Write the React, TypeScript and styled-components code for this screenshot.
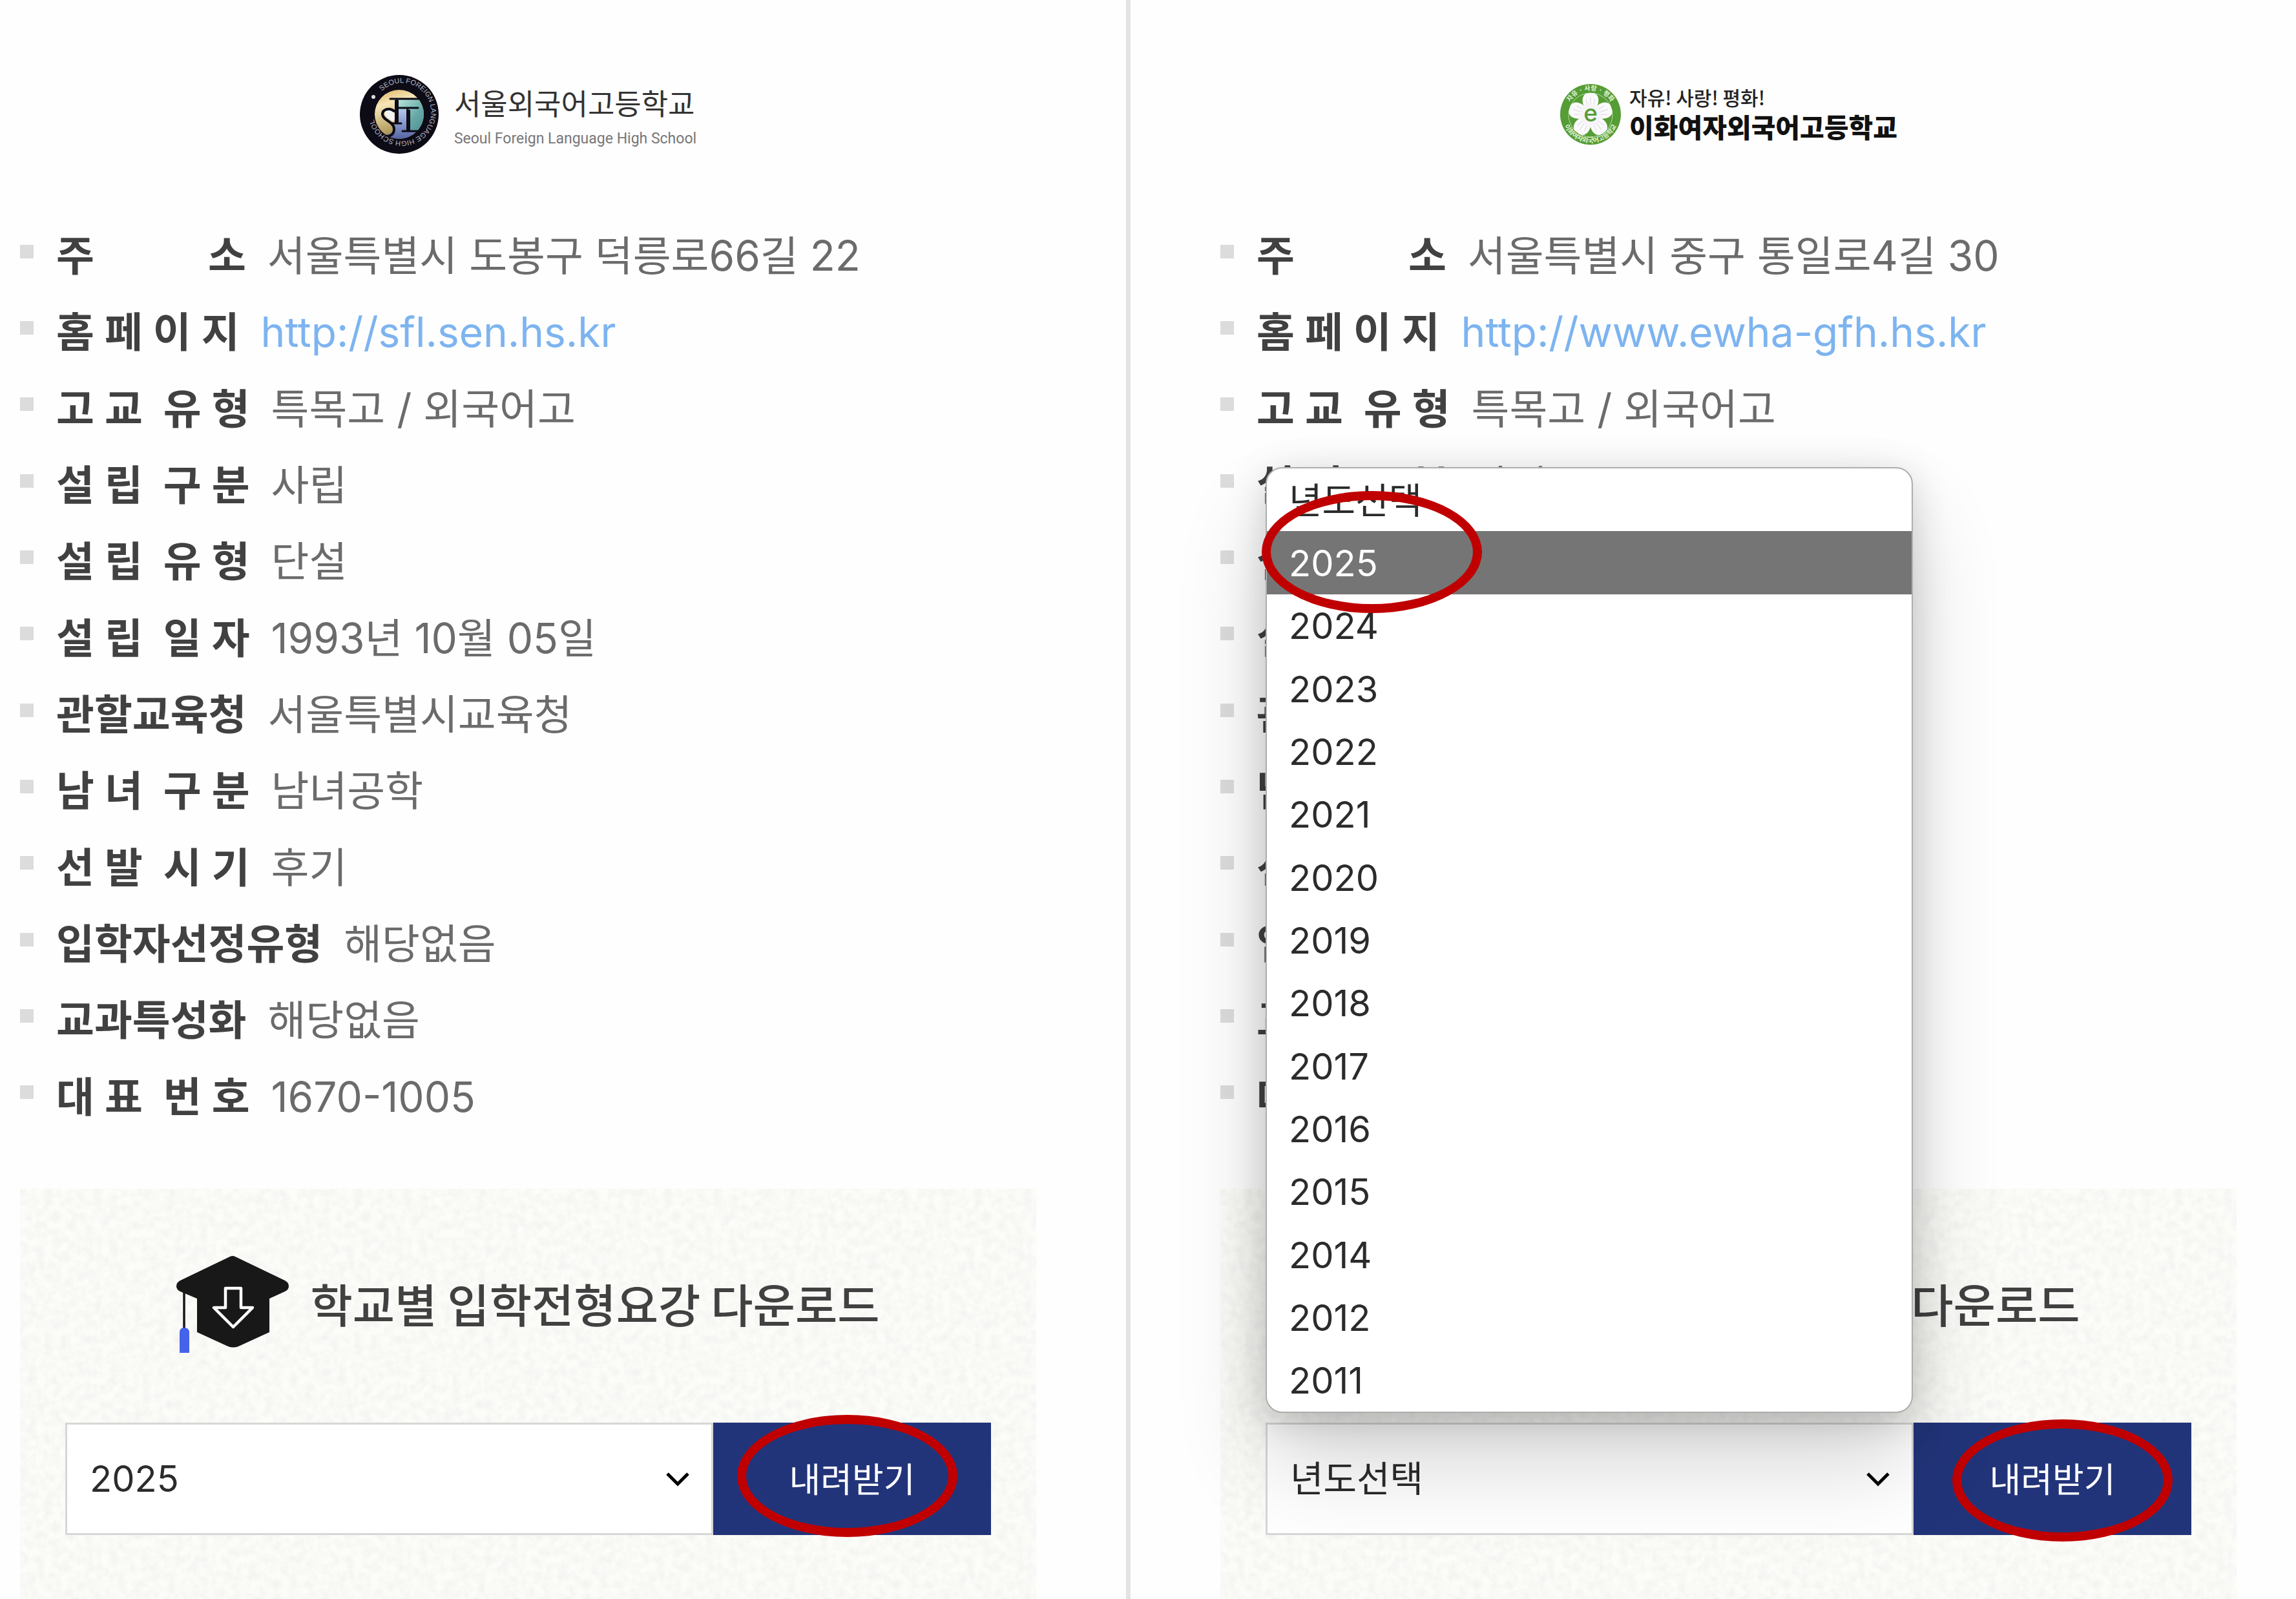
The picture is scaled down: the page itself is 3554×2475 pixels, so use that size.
import React, { useId } from "react";
import styled, { createGlobalStyle } from "styled-components";

const GlobalStyle = createGlobalStyle`
  *, *::before, *::after { box-sizing: border-box; }
  body {
    margin: 0;
    background: #fefefe;
    font-family: Inter, "Noto Sans CJK KR", sans-serif;
    color: #2b2b2b;
  }
  ul { margin: 0; padding: 0; list-style: none; }
`;

const paper = `<svg xmlns="http://www.w3.org/2000/svg" width="480" height="480"><filter id="n" x="0" y="0" width="100%" height="100%"><feTurbulence type="fractalNoise" baseFrequency="0.08" numOctaves="2" seed="4" stitchTiles="stitch"/><feColorMatrix values="0 0 0 0 0.55  0 0 0 0 0.56  0 0 0 0 0.57  0.28 0 0 0 -0.09"/></filter><rect width="480" height="480" filter="url(#n)"/></svg>`;
const paperUrl = `url("data:image/svg+xml,${encodeURIComponent(paper)}")`;

const Page = styled.main`
  display: grid;
  grid-template-columns: 1750fr 1804fr;
  min-height: 100vh;
`;

const Panel = styled.section<{ $first?: boolean }>`
  display: flex;
  flex-direction: column;
  min-width: 0;
  min-height: 100vh;
  padding: ${(p) => (p.$first ? "0 139px 0 31px" : "0 92px 0 139px")};
  border-right: ${(p) => (p.$first ? "7px solid #e3e3e3" : "0")};
`;

const Brand = styled.header<{ $gap: number }>`
  display: flex;
  justify-content: center;
  align-items: center;
  gap: ${(p) => p.$gap}px;
  height: 337px;
  padding-top: 16px;
`;

const BrandText = styled.div<{ $gap: number }>`
  display: flex;
  flex-direction: column;
  gap: ${(p) => p.$gap}px;
  white-space: nowrap;
`;

const SeoulName = styled.strong`
  font: 400 45px/68px "Noto Sans CJK KR", sans-serif;
  color: #333;
`;

const SeoulEnglish = styled.span`
  font: 400 23px/28px Roboto, sans-serif;
  color: #777;
`;

const EwhaMotto = styled.span`
  font: 500 30px/36px "Noto Sans CJK KR", sans-serif;
  color: #222;
`;

const EwhaName = styled.strong`
  font: 900 41px/54px "Noto Sans CJK KR", sans-serif;
  color: #111;
`;

const Facts = styled.ul`
  display: grid;
  grid-auto-rows: 1fr;
  height: 1420px;
  margin-bottom: 83px;
`;

const Fact = styled.li`
  display: flex;
  align-items: center;
  font-size: 64px;
  line-height: 96px;
  white-space: nowrap;

  &::before {
    content: "";
    width: 21px;
    height: 21px;
    margin: 0 35px 14px 0;
    background: #dcdcdc;
  }
`;

const FactLabel = styled.span`
  display: flex;
  margin-right: 33px;
  font-weight: 700;
  color: #414141;
`;

const Syllable = styled.span<{ $spaces: number }>`
  margin-left: ${(p) => p.$spaces * 16}px;
`;

const FactValue = styled.span`
  color: #6b6b6b;
`;

const FactLink = styled.a`
  color: #7db4f0;
  text-decoration: none;
`;

const Download = styled.section`
  display: flex;
  flex-direction: column;
  flex: 1;
  gap: 107px;
  padding: 104px 70px 98px;
  background: #fcfcf9 ${paperUrl};
`;

const DownloadTitle = styled.h2`
  display: flex;
  align-items: center;
  justify-content: center;
  gap: 32px;
  height: 151px;
  margin: 0;
  font: 500 71px/106px "Noto Sans CJK KR", sans-serif;
  color: #414141;
  white-space: nowrap;

  label {
    padding-bottom: 8px;
  }
`;

const Controls = styled.div`
  display: grid;
  grid-template-columns: 1003fr 430fr;
  height: 174px;
`;

const SelectBox = styled.div`
  position: relative;
`;

const YearSelect = styled.select`
  appearance: none;
  width: 100%;
  height: 100%;
  padding: 0 100px 0 35px;
  border: 3px solid #d7d7d7;
  border-radius: 0;
  background: #fff;
  font: 400 56px/84px Inter, "Noto Sans CJK KR", sans-serif;
  color: #2b2b2b;
`;

const Chevron = styled.svg`
  position: absolute;
  right: 34px;
  top: 50%;
  width: 42px;
  height: 28px;
  margin-top: -14px;
  pointer-events: none;
`;

const ButtonBox = styled.div`
  position: relative;
`;

const DownloadButton = styled.button`
  width: 100%;
  height: 100%;
  padding: 0 0 4px;
  border: 0;
  background: #223479;
  color: #fff;
  font: 400 53px/78px "Noto Sans CJK KR", sans-serif;
`;

const Mark = styled.span<{ $left: number; $top: number }>`
  position: absolute;
  left: ${(p) => p.$left}px;
  top: ${(p) => p.$top}px;
  width: 341px;
  height: 189px;
  border: 14px solid #c00000;
  border-radius: 50%;
  pointer-events: none;
`;

const MenuBox = styled.div`
  position: absolute;
  left: 0;
  right: 1px;
  bottom: calc(100% + 15px);
  z-index: 2;
`;

const Menu = styled.ul`
  display: flex;
  flex-direction: column;
  height: 1464px;
  border: 2px solid #adadad;
  border-radius: 26px;
  background: #fff;
  overflow: hidden;
  box-shadow: 0 12px 60px rgba(0, 0, 0, 0.17), 0 80px 140px rgba(0, 0, 0, 0.16);
`;

const MenuItem = styled.li`
  display: flex;
  flex: 1;
  min-height: 0;
`;

const MenuOption = styled.button<{ $active: boolean }>`
  width: 100%;
  padding: 2px 34px 0;
  border: 0;
  background: ${(p) => (p.$active ? "#757575" : "transparent")};
  color: ${(p) => (p.$active ? "#fff" : "#2b2b2b")};
  font: 400 56px/84px Inter, "Noto Sans CJK KR", sans-serif;
  text-align: left;
`;

const placeholder = "년도선택";
const years = [
  "2025", "2024", "2023", "2022", "2021", "2020", "2019",
  "2018", "2017", "2016", "2015", "2014", "2012", "2011",
];

type FactData = { label: string; value: string; link?: boolean };

const seoulFacts: FactData[] = [
  { label: "주           소", value: "서울특별시 도봉구 덕릉로66길 22" },
  { label: "홈 페 이 지", value: "http://sfl.sen.hs.kr", link: true },
  { label: "고 교  유 형", value: "특목고 / 외국어고" },
  { label: "설 립  구 분", value: "사립" },
  { label: "설 립  유 형", value: "단설" },
  { label: "설 립  일 자", value: "1993년 10월 05일" },
  { label: "관할교육청", value: "서울특별시교육청" },
  { label: "남 녀  구 분", value: "남녀공학" },
  { label: "선 발  시 기", value: "후기" },
  { label: "입학자선정유형", value: "해당없음" },
  { label: "교과특성화", value: "해당없음" },
  { label: "대 표  번 호", value: "1670-1005" },
];

const ewhaFacts: FactData[] = seoulFacts.map((fact, i) => {
  if (i === 0) return { ...fact, value: "서울특별시 중구 통일로4길 30" };
  if (i === 1) return { ...fact, value: "http://www.ewha-gfh.hs.kr" };
  return fact;
});

function SpacedLabel({ text }: { text: string }) {
  const parts = text.match(/ *[^ ]+/g) ?? [];
  return (
    <FactLabel>
      {parts.map((part, i) => (
        <Syllable key={i} $spaces={part.length - part.trim().length}>
          {part.trim()}
        </Syllable>
      ))}
    </FactLabel>
  );
}

function FactList({ facts }: { facts: FactData[] }) {
  return (
    <Facts>
      {facts.map((fact) => (
        <Fact key={fact.label}>
          <SpacedLabel text={fact.label} />
          {fact.link ? (
            <FactLink href={fact.value}>{fact.value}</FactLink>
          ) : (
            <FactValue>{fact.value}</FactValue>
          )}
        </Fact>
      ))}
    </Facts>
  );
}

function SeoulEmblem() {
  return (
    <svg width="122" height="122" viewBox="0 0 122 122" aria-hidden="true">
      <defs>
        <linearGradient id="gold" x1="0" y1="0" x2="0.3" y2="1">
          <stop offset="0" stopColor="#d9a94e" />
          <stop offset="0.35" stopColor="#f6e6b8" />
          <stop offset="1" stopColor="#9c8540" />
        </linearGradient>
        <linearGradient id="teal" x1="0" y1="0" x2="1" y2="1">
          <stop offset="0" stopColor="#c4ebe6" />
          <stop offset="0.6" stopColor="#66a8a6" />
          <stop offset="1" stopColor="#4c8f90" />
        </linearGradient>
        <linearGradient id="navy" x1="0" y1="0" x2="0" y2="1">
          <stop offset="0" stopColor="#b4c4ee" />
          <stop offset="1" stopColor="#4f5f9e" />
        </linearGradient>
        <clipPath id="disc"><circle cx="61" cy="61" r="38" /></clipPath>
        <path id="ring" d="M34 25 A45 45 0 1 1 33 26" />
      </defs>
      <circle cx="61" cy="61" r="61" fill="#0c0b16" />
      <circle cx="21" cy="34" r="3" fill="#ddd" />
      <g clipPath="url(#disc)">
        <rect x="20" y="20" width="82" height="82" fill="url(#gold)" />
        <path d="M54 36 H102 V88 H74 L68 60 H54 Z" fill="url(#teal)" />
        <path d="M56 54 H74 V86 H92 Q78 102 61 102 Q46 100 40 92 Q54 92 54 76 Z" fill="url(#navy)" />
        <path d="M53 56 C42 46 34 58 42 66 C50 72 54 76 54 64 Z" fill="#f4f3f4" />
      </g>
      <g fill="none" stroke="#0c0b16" strokeLinecap="round">
        <path d="M53 56 C46 50 35 53 35 61 C36 71 53 72 53 84 C53 92 46 97 38 94" strokeWidth="4" />
        <path d="M47 37 H92 M57 37 V74 M57 51 H90 M74 52 V86 M66 87 H92 L95 81 M50 75 H64" strokeWidth="3" />
        <path d="M57 39 V74 M75 54 V86" strokeWidth="6" strokeLinecap="butt" />
      </g>
      <text fill="#b9b9c2" fontFamily="Liberation Sans, sans-serif" fontSize="11">
        <textPath href="#ring">SEOUL FOREIGN LANGUAGE HIGH SCHOOL</textPath>
      </text>
    </svg>
  );
}

function EwhaEmblem() {
  const petals = [0, 72, 144, 216, 288];
  return (
    <svg width="96" height="98" viewBox="0 0 96 98" aria-hidden="true">
      <defs>
        <path id="upper" d="M11 49 A37 37 0 0 1 85 49" />
        <path id="lower" d="M4 49 A44 44 0 0 0 92 49" />
      </defs>
      <circle cx="48" cy="49" r="47" fill="#559d35" />
      <circle cx="48" cy="50" r="34" fill="none" stroke="#b9dda8" strokeWidth="1" />
      {petals.map((angle) => (
        <g key={angle} transform={`rotate(${angle} 48 50)`}>
          <path d="M48 50 C30 34 34 16 45 16 L48 18 L51 16 C62 16 66 34 48 50 Z" fill="#fbfafc" />
          <circle cx="48" cy="28" r="12" fill="#fbfafc" />
          <path d="M48 36 V22 M44 37 L41 25 M52 37 L55 25" stroke="#d9d6dd" strokeWidth="1" />
        </g>
      ))}
      <circle cx="48" cy="50" r="17" fill="#f6f4f8" />
      <text x="48" y="60" textAnchor="middle" fill="#559d35" fontFamily="Inter, sans-serif" fontWeight="500" fontSize="37">e</text>
      <text fill="#e6f5dd" fontFamily="Noto Sans CJK KR, sans-serif" fontSize="10" fontWeight="700" textAnchor="middle">
        <textPath href="#upper" startOffset="50%">자유 · 사랑 · 평화</textPath>
      </text>
      <text fill="#e6f5dd" fontFamily="Noto Sans CJK KR, sans-serif" fontSize="10" fontWeight="700" textAnchor="middle">
        <textPath href="#lower" startOffset="50%">이화여자외국어고등학교</textPath>
      </text>
    </svg>
  );
}

function CapIcon() {
  return (
    <svg width="175" height="151" viewBox="0 0 175 151" aria-hidden="true">
      <path
        d="M83 1 Q87 -1 91 1 L168 38 Q174 41 174 47 Q174 52 168 55 L144 66 V118 L96 140 Q88 143 80 140 L32 118 V66 L6 55 Q0 52 0 47 Q0 41 6 38 Z"
        fill="#181818"
      />
      <path d="M12 54 V112" stroke="#181818" strokeWidth="3.5" />
      <path d="M5 150 V119 Q5 111 12 111 Q20 111 20 119 V150 Z" fill="#4562ea" />
      <path
        d="M76 50 H100 V80 H118 L88 110 L58 80 H76 Z"
        fill="none"
        stroke="#fff"
        strokeWidth="4.5"
        strokeLinejoin="round"
      />
    </svg>
  );
}

type DownloadCardProps = { value: string; open?: boolean; markLeft: number; markTop: number };

function DownloadCard({ value, open, markLeft, markTop }: DownloadCardProps) {
  const id = useId();
  return (
    <Download>
      <DownloadTitle>
        <CapIcon />
        <label htmlFor={id}>학교별 입학전형요강 다운로드</label>
      </DownloadTitle>
      <Controls>
        <SelectBox>
          <YearSelect id={id} defaultValue={value}>
            {[placeholder, ...years].map((year) => (
              <option key={year}>{year}</option>
            ))}
          </YearSelect>
          <Chevron viewBox="0 0 42 28" aria-hidden="true">
            <path d="M5 6 L21 22 L37 6" fill="none" stroke="#000" strokeWidth="5" />
          </Chevron>
          {open && (
            <MenuBox>
              <Menu>
                {[placeholder, ...years].map((year) => (
                  <MenuItem key={year}>
                    <MenuOption type="button" $active={year === "2025"}>{year}</MenuOption>
                  </MenuItem>
                ))}
              </Menu>
              <Mark $left={-6} $top={37} />
            </MenuBox>
          )}
        </SelectBox>
        <ButtonBox>
          <DownloadButton type="button">내려받기</DownloadButton>
          <Mark $left={markLeft} $top={markTop} />
        </ButtonBox>
      </Controls>
    </Download>
  );
}

export default function App() {
  return (
    <>
      <GlobalStyle />
      <Page>
        <Panel $first>
          <Brand $gap={24}>
            <SeoulEmblem />
            <BrandText $gap={8}>
              <SeoulName>서울외국어고등학교</SeoulName>
              <SeoulEnglish>Seoul Foreign Language High School</SeoulEnglish>
            </BrandText>
          </Brand>
          <FactList facts={seoulFacts} />
          <DownloadCard value="2025" markLeft={37} markTop={-12} />
        </Panel>
        <Panel>
          <Brand $gap={12}>
            <EwhaEmblem />
            <BrandText $gap={0}>
              <EwhaMotto>자유! 사랑! 평화!</EwhaMotto>
              <EwhaName>이화여자외국어고등학교</EwhaName>
            </BrandText>
          </Brand>
          <FactList facts={ewhaFacts} />
          <DownloadCard value={placeholder} open markLeft={60} markTop={-5} />
        </Panel>
      </Page>
    </>
  );
}
